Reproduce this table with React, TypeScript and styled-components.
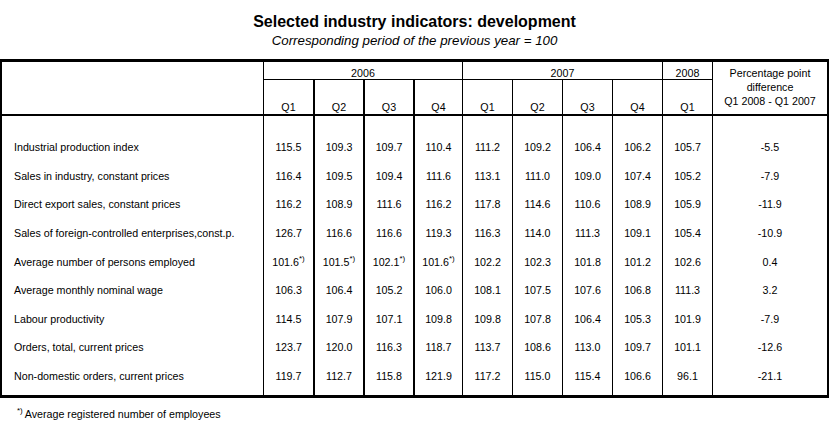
import styled, {createGlobalStyle} from 'styled-components';

const GlobalStyle = createGlobalStyle`
    body {
        margin: 0;
        background: #fff;
        color: #000;
        font-family: "Liberation Sans", Arial, sans-serif;
    }
`;

// first column, 2006 Q1-Q4, 2007 Q1-Q4, 2008 Q1, difference
const COLUMNS = '261px 50px 50px 50px 49px 50px 50px 50px 50px 50px 1fr';
const LINES = [0, 1, 2, 2, 2, 1, 1, 1, 1, 1, 1];

const Page = styled.div`
    width: 829px;
    padding-top: 13px;
`;

const Title = styled.h1`
    margin: 0;
    font-size: 16px;
    line-height: 18px;
    font-weight: bold;
    text-align: center;
`;

const Subtitle = styled.div`
    margin-top: 2px;
    font-size: 13.3px;
    line-height: 15px;
    font-style: italic;
    text-align: center;
`;

const Table = styled.div`
    margin-top: 11px;
    border: 2px solid #000;
    border-top-width: 3px;
    border-bottom-width: 3px;
    font-size: 10.7px;
    line-height: 12px;
`;

const Head = styled.div`
    display: grid;
    grid-template-columns: ${COLUMNS};
    grid-template-rows: 18px 34px;
    border-bottom: 2px solid #000;
`;

const HeadCell = styled.div<{ $col: number; $span?: number; $row: string; $line: number }>`
    grid-column: ${p => p.$col} / span ${p => p.$span ?? 1};
    grid-row: ${p => p.$row};
    border-left: ${p => p.$line}px solid #000;
    display: flex;
    justify-content: center;
    align-items: flex-end;
    white-space: nowrap;
`;

const YearCell = styled(HeadCell)`
    border-bottom: 1px solid #000;
`;

const QuarterCell = styled(HeadCell)`
    padding-bottom: 1px;
`;

const DiffHead = styled(HeadCell)`
    flex-direction: column;
    align-items: center;
    justify-content: flex-start;
    padding-top: 4px;
    line-height: 14px;
`;

const Row = styled.div<{ $h: number }>`
    display: grid;
    grid-template-columns: ${COLUMNS};
    height: ${p => p.$h}px;
`;

const Cell = styled.div<{ $line: number }>`
    border-left: ${p => p.$line}px solid #000;
    display: flex;
    align-items: center;
    justify-content: center;
    white-space: nowrap;
`;

const Label = styled(Cell)`
    justify-content: flex-start;
    padding-left: 12px;
`;

const Sup = styled.span`
    font-size: 8px;
    line-height: 8px;
    align-self: flex-start;
    margin-top: 8px;
`;

const Footnote = styled.div`
    margin-top: 10px;
    padding-left: 17px;
    font-size: 10.7px;
    line-height: 12px;
    display: flex;
    align-items: flex-start;

    ${Sup} {
        margin-top: -1px;
        margin-right: 2px;
    }
`;

const rows: string[][] = [
    ['Industrial production index', '115.5', '109.3', '109.7', '110.4', '111.2', '109.2', '106.4', '106.2', '105.7', '-5.5'],
    ['Sales in industry, constant prices', '116.4', '109.5', '109.4', '111.6', '113.1', '111.0', '109.0', '107.4', '105.2', '-7.9'],
    ['Direct export sales, constant prices', '116.2', '108.9', '111.6', '116.2', '117.8', '114.6', '110.6', '108.9', '105.9', '-11.9'],
    ['Sales of foreign-controlled enterprises,const.p.', '126.7', '116.6', '116.6', '119.3', '116.3', '114.0', '111.3', '109.1', '105.4', '-10.9'],
    ['Average number of persons employed', '101.6*', '101.5*', '102.1*', '101.6*', '102.2', '102.3', '101.8', '101.2', '102.6', '0.4'],
    ['Average monthly nominal wage', '106.3', '106.4', '105.2', '106.0', '108.1', '107.5', '107.6', '106.8', '111.3', '3.2'],
    ['Labour productivity', '114.5', '107.9', '107.1', '109.8', '109.8', '107.8', '106.4', '105.3', '101.9', '-7.9'],
    ['Orders, total, current prices', '123.7', '120.0', '116.3', '118.7', '113.7', '108.6', '113.0', '109.7', '101.1', '-12.6'],
    ['Non-domestic orders, current prices', '119.7', '112.7', '115.8', '121.9', '117.2', '115.0', '115.4', '106.6', '96.1', '-21.1'],
];

const quarters = ['Q1', 'Q2', 'Q3', 'Q4', 'Q1', 'Q2', 'Q3', 'Q4', 'Q1'];

const Spacer = ({h}: { h: number }) => (
    <Row $h={h}>
        {LINES.map((w, i) => <Cell key={i} $line={w}/>)}
    </Row>
);

const Value = ({text}: { text: string }) => {
    if (text.endsWith('*')) {
        return <>{text.slice(0, -1)}<Sup>*)</Sup></>;
    }
    return <>{text}</>;
};

export default function App() {
    return (
        <Page>
            <GlobalStyle/>
            <Title>Selected industry indicators: development</Title>
            <Subtitle>Corresponding period of the previous year = 100</Subtitle>
            <Table>
                <Head>
                    <HeadCell $col={1} $row="1 / 3" $line={0}/>
                    <YearCell $col={2} $span={4} $row="1" $line={1}>2006</YearCell>
                    <YearCell $col={6} $span={4} $row="1" $line={1}>2007</YearCell>
                    <YearCell $col={10} $row="1" $line={1}>2008</YearCell>
                    <DiffHead $col={11} $row="1 / 3" $line={1}>
                        <span>Percentage point</span>
                        <span>difference</span>
                        <span>Q1 2008 - Q1 2007</span>
                    </DiffHead>
                    {quarters.map((q, i) => (
                        <QuarterCell key={i} $col={i + 2} $row="2" $line={LINES[i + 1]}>{q}</QuarterCell>
                    ))}
                </Head>
                <Spacer h={16.7}/>
                {rows.map(([label, ...values]) => (
                    <Row key={label} $h={28.625}>
                        <Label $line={0}>{label}</Label>
                        {values.map((v, i) => (
                            <Cell key={i} $line={LINES[i + 1]}><Value text={v}/></Cell>
                        ))}
                    </Row>
                ))}
                <Spacer h={4.9}/>
            </Table>
            <Footnote>
                <Sup>*)</Sup>
                <span>Average registered number of employees</span>
            </Footnote>
        </Page>
    );
}
